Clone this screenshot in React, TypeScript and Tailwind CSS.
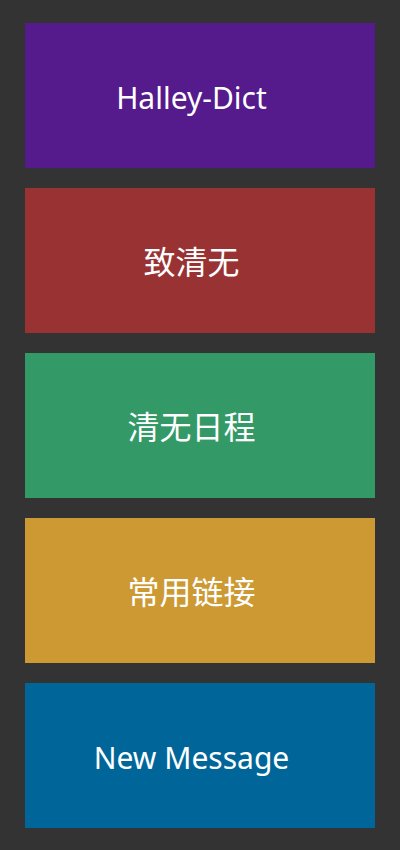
import React from 'react';

const tiles = [
    { label: 'Halley-Dict', bg: 'bg-[#551a8b]', size: 'text-[30px]' },
    { label: '致清无', bg: 'bg-[#993333]', size: 'text-[32px]' },
    { label: '清无日程', bg: 'bg-[#339966]', size: 'text-[32px]' },
    { label: '常用链接', bg: 'bg-[#cc9933]', size: 'text-[32px]' },
    { label: 'New Message', bg: 'bg-[#006699]', size: 'text-[30px]' },
];

export default function App() {
    return (
        <div className="min-h-[850px] w-[400px] bg-[#333333] pt-[23px] pb-[22px] px-[25px] flex flex-col gap-[20px]">
            {tiles.map((tile) => (
                <div
                    key={tile.label}
                    className={`${tile.bg} ${tile.size} h-[145px] flex items-center justify-center text-white pt-[3px] pr-[17px]`}
                    style={{ fontFamily: '"Noto Sans", "Noto Sans CJK SC", sans-serif' }}
                >
                    {tile.label}
                </div>
            ))}
        </div>
    );
}
